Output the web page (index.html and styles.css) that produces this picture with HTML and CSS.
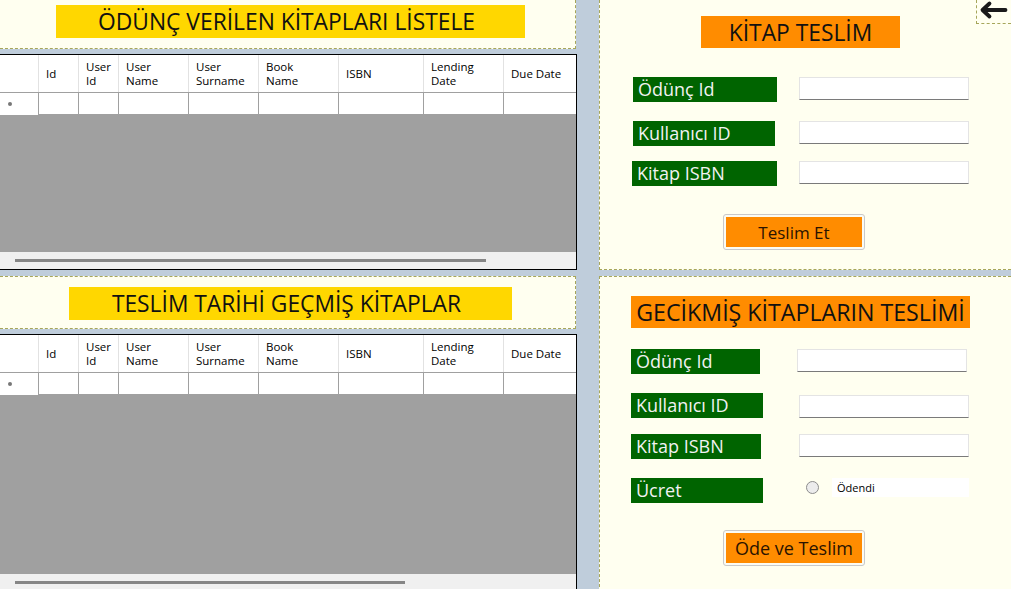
FILE: index.html
```html
<!DOCTYPE html>
<html lang="tr">
<head>
<meta charset="utf-8">
<title>Kitap Teslim</title>
<link rel="stylesheet" href="styles.css">
</head>
<body>
<div class="app">
  <div class="left">
    <div class="title-panel tp1">
      <div class="title yellow t1">ÖDÜNÇ VERİLEN KİTAPLARI LİSTELE</div>
    </div>
    <div class="grid g1">
      <div class="hdr">
        <div class="c rh"></div>
        <div class="c">Id</div>
        <div class="c">User<br>Id</div>
        <div class="c">User<br>Name</div>
        <div class="c">User<br>Surname</div>
        <div class="c">Book<br>Name</div>
        <div class="c">ISBN</div>
        <div class="c">Lending<br>Date</div>
        <div class="c last">Due Date</div>
      </div>
      <div class="row">
        <div class="c rh"><span class="dot"></span></div>
        <div class="c"></div><div class="c"></div><div class="c"></div><div class="c"></div>
        <div class="c"></div><div class="c"></div><div class="c"></div><div class="c last"></div>
      </div>
      <div class="area"></div>
      <div class="hscroll"><div class="thumb thumb-a"></div></div>
    </div>
    <div class="title-panel tp2">
      <div class="title yellow t2">TESLİM TARİHİ GEÇMİŞ KİTAPLAR</div>
    </div>
    <div class="grid g2">
      <div class="hdr">
        <div class="c rh"></div>
        <div class="c">Id</div>
        <div class="c">User<br>Id</div>
        <div class="c">User<br>Name</div>
        <div class="c">User<br>Surname</div>
        <div class="c">Book<br>Name</div>
        <div class="c">ISBN</div>
        <div class="c">Lending<br>Date</div>
        <div class="c last">Due Date</div>
      </div>
      <div class="row">
        <div class="c rh"><span class="dot"></span></div>
        <div class="c"></div><div class="c"></div><div class="c"></div><div class="c"></div>
        <div class="c"></div><div class="c"></div><div class="c"></div><div class="c last"></div>
      </div>
      <div class="area"></div>
      <div class="hscroll"><div class="thumb thumb-b"></div></div>
    </div>
  </div>

  <div class="right">
    <div class="panel p1">
      <div class="back-box">
        <svg class="back" width="33" height="22" viewBox="0 0 33 22" aria-hidden="true">
          <path d="M28.5 10H6 M12.5 3.5L5.5 10L12.5 16.5" fill="none" stroke="#1a1a1a" stroke-width="3.8" stroke-linecap="round" stroke-linejoin="round"/>
        </svg>
      </div>
      <div class="title orange t3">KİTAP TESLİM</div>
      <div class="frow r1"><div class="lbl w144">Ödünç Id</div><div class="inp"></div></div>
      <div class="frow r2"><div class="lbl w142">Kullanıcı ID</div><div class="inp"></div></div>
      <div class="frow r3"><div class="lbl w145 l632">Kitap ISBN</div><div class="inp"></div></div>
      <button class="btn b1"><span>Teslim Et</span></button>
    </div>
    <div class="panel p2">
      <div class="title orange t4">GECİKMİŞ KİTAPLARIN TESLİMİ</div>
      <div class="frow s1"><div class="lbl w129 l631">Ödünç Id</div><div class="inp in-shift"></div></div>
      <div class="frow s2"><div class="lbl w132 l631">Kullanıcı ID</div><div class="inp in-down"></div></div>
      <div class="frow s3"><div class="lbl w130 l631">Kitap ISBN</div><div class="inp"></div></div>
      <div class="frow s4">
        <div class="lbl w132 l631">Ücret</div>
        <div class="radio-line"><span class="radio"></span><span class="radio-text">Ödendi</span></div>
      </div>
      <button class="btn b2"><span>Öde ve Teslim</span></button>
    </div>
  </div>
</div>
</body>
</html>
```

FILE: styles.css
```css
* { box-sizing: border-box; }
html, body { margin: 0; padding: 0; }
body {
  width: 1011px;
  height: 589px;
  overflow: hidden;
  background: #bfcddb;
  font-family: "Open Sans", "Noto Sans", sans-serif;
  color: #111;
}
.app {
  display: grid;
  grid-template-columns: 577px 412px;
  column-gap: 22px;
  height: 589px;
}

/* ---------- left column ---------- */
.left { display: flex; flex-direction: column; }
.title-panel {
  width: 576px;
  background: #fffff0;
  border-right: 1px dashed #a6a65a;
  border-bottom: 1px dashed #a6a65a;
}
.tp1 { height: 49px; padding: 5px 0 0 56px; }
.tp2 { height: 53px; margin-top: 6px; padding: 10px 0 0 69px; border-top: 1px dashed #a6a65a; }

.title {
  display: flex;
  align-items: center;
  justify-content: center;
  font-size: 22.8px;
  color: #111;
  white-space: nowrap;
}
.yellow { background: #ffd700; height: 33px; padding-right: 8px; }
.t1 { width: 469px; }
.t2 { width: 443px; }

.grid {
  display: flex;
  flex-direction: column;
  background: #a0a0a0;
  border-top: 1px solid #000;
  border-right: 1px solid #000;
  border-bottom: 1px solid #000;
  margin-top: 5px;
}
.g1 { height: 216px; }
.g2 { height: 258px; }

.hdr, .row {
  display: grid;
  grid-template-columns: 39px 40px 40px 70px 70px 80px 85px 80px 1fr;
  background: #fff;
}
.hdr { height: 38px; border-bottom: 1px solid #a0a0a0; }
.row { height: 22px; }
.c {
  font-size: 11.5px;
  line-height: 14px;
  padding-left: 7px;
  display: flex;
  align-items: center;
  color: #000;
}
.hdr .c { border-right: 1px solid #e2e2e2; padding-top: 1px; }
.hdr .c.last { border-right: none; }
.row .c { border-right: 1px solid #a0a0a0; border-bottom: 1px solid #a0a0a0; }
.row .c.last { border-right: none; }
.row .c.rh { border-bottom: none; padding-left: 8px; }
.dot {
  width: 4px;
  height: 4px;
  border-radius: 50%;
  background: #777;
}
.area { flex: 1; }
.hscroll {
  height: 17px;
  background: #f0f0f0;
  padding: 7px 0 0 15px;
}
.thumb { height: 3px; background: #868686; }
.thumb-a { width: 471px; }
.thumb-b { width: 390px; }

/* ---------- right column ---------- */
.right { display: flex; flex-direction: column; }
.panel {
  background: #fffff0;
  border-left: 1px dashed #a6a65a;
  display: flex;
  flex-direction: column;
  align-items: flex-start;
}
.p1 {
  position: relative;
  height: 270px;
  border-bottom: 1px dashed #a6a65a;
  padding-top: 16px;
}
.p2 {
  flex: 1;
  margin-top: 6px;
  border-top: 1px dashed #a6a65a;
  padding-top: 19px;
}

.back-box {
  position: absolute;
  top: 0;
  right: 0;
  width: 35px;
  height: 24px;
  border-left: 1px dashed #a6a65a;
  border-bottom: 1px dashed #a6a65a;
}
.back { display: block; }

.orange { background: #ff8c00; height: 32px; }
.t3 { width: 199px; margin-left: 101px; }
.t4 { width: 339px; margin-left: 31px; font-size: 23.2px; }

.frow {
  display: flex;
  align-items: flex-start;
  justify-content: space-between;
  width: 100%;
  padding-right: 42px;
}
.r1 { margin-top: 29px; }
.r2 { margin-top: 19px; }
.r3 { margin-top: 15px; }
.s1 { margin-top: 21px; }
.s2 { margin-top: 19px; }
.s3 { margin-top: 16px; }
.s4 { margin-top: 19px; }

.lbl {
  height: 25px;
  background: #006400;
  color: #f2f2f2;
  font-size: 18px;
  line-height: 25px;
  padding-left: 5px;
  margin-left: 33px;
  white-space: nowrap;
}
.l632 { margin-left: 32px; }
.l631 { margin-left: 31px; }
.w144 { width: 144px; }
.w142 { width: 142px; }
.w145 { width: 145px; }
.w129 { width: 129px; }
.w132 { width: 132px; }
.w130 { width: 130px; }

.inp {
  width: 170px;
  height: 23px;
  background: #fff;
  border: 1px solid #e4e4e4;
  border-bottom: 1px solid #7a7a7a;
}
.in-shift { margin-right: 2px; }
.in-down { margin-top: 2px; }

.radio-line {
  display: flex;
  align-items: center;
  width: 166px;
  height: 19px;
}
.radio {
  width: 13px;
  height: 13px;
  border-radius: 50%;
  border: 1px solid #8c8c8c;
  background: #ececec;
  margin: 0 13px 0 3px;
}
.radio-text {
  flex: 1;
  align-self: stretch;
  background: #fff;
  font-size: 11px;
  line-height: 19px;
  padding-left: 5px;
  color: #000;
}

.btn {
  width: 142px;
  height: 36px;
  margin-left: 123px;
  padding: 2px;
  border: 1px solid #c9c9c9;
  border-radius: 3px;
  background: #fbfbf3;
  font-family: inherit;
  cursor: pointer;
}
.btn span {
  display: flex;
  align-items: center;
  justify-content: center;
  height: 100%;
  background: #ff8c00;
  color: #2a1300;
  font-size: 17px;
}
.b2 span { font-size: 18px; }
.b1 { margin-top: 28px; }
.b2 { margin-top: 27px; }
```
